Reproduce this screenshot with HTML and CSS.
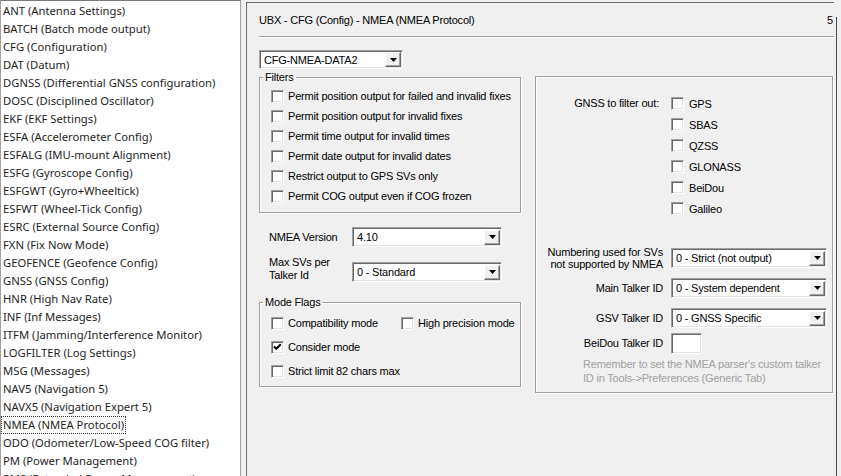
FILE: index.html
```html
<!DOCTYPE html>
<html>
<head>
<meta charset="utf-8">
<link rel="stylesheet" href="styles.css">
</head>
<body>
<div class="list">
  <div class="item">ANT (Antenna Settings)</div>
  <div class="item">BATCH (Batch mode output)</div>
  <div class="item">CFG (Configuration)</div>
  <div class="item">DAT (Datum)</div>
  <div class="item">DGNSS (Differential GNSS configuration)</div>
  <div class="item">DOSC (Disciplined Oscillator)</div>
  <div class="item">EKF (EKF Settings)</div>
  <div class="item">ESFA (Accelerometer Config)</div>
  <div class="item">ESFALG (IMU-mount Alignment)</div>
  <div class="item">ESFG (Gyroscope Config)</div>
  <div class="item">ESFGWT (Gyro+Wheeltick)</div>
  <div class="item">ESFWT (Wheel-Tick Config)</div>
  <div class="item">ESRC (External Source Config)</div>
  <div class="item">FXN (Fix Now Mode)</div>
  <div class="item">GEOFENCE (Geofence Config)</div>
  <div class="item">GNSS (GNSS Config)</div>
  <div class="item">HNR (High Nav Rate)</div>
  <div class="item">INF (Inf Messages)</div>
  <div class="item">ITFM (Jamming/Interference Monitor)</div>
  <div class="item">LOGFILTER (Log Settings)</div>
  <div class="item">MSG (Messages)</div>
  <div class="item">NAV5 (Navigation 5)</div>
  <div class="item">NAVX5 (Navigation Expert 5)</div>
  <div class="item focus">NMEA (NMEA Protocol)</div>
  <div class="item">ODO (Odometer/Low-Speed COG filter)</div>
  <div class="item">PM (Power Management)</div>
  <div class="item">PMS (Extended Power Management)</div>
</div>

<div class="panel">
  <div class="title"><span>UBX - CFG (Config) - NMEA (NMEA Protocol)</span><span class="cut">5</span></div>
  <div class="rule"></div>

  <div class="cols">
    <div class="leftcol">
      <div class="combo w144"><span class="val">CFG-NMEA-DATA2</span><span class="btn"><svg width="7" height="4" viewBox="0 0 7 4"><path d="M0 0H7L3.5 4Z"/></svg></span></div>

      <fieldset class="grp filters">
        <legend>Filters</legend>
        <div class="chk"><span class="cb"></span>Permit position output for failed and invalid fixes</div>
        <div class="chk"><span class="cb"></span>Permit position output for invalid fixes</div>
        <div class="chk"><span class="cb"></span>Permit time output for invalid times</div>
        <div class="chk"><span class="cb"></span>Permit date output for invalid dates</div>
        <div class="chk"><span class="cb"></span>Restrict output to GPS SVs only</div>
        <div class="chk"><span class="cb"></span>Permit COG output even if COG frozen</div>
      </fieldset>

      <div class="ver-row">
        <span class="lbl">NMEA Version</span>
        <div class="combo w150"><span class="val">4.10</span><span class="btn"><svg width="7" height="4" viewBox="0 0 7 4"><path d="M0 0H7L3.5 4Z"/></svg></span></div>
      </div>
      <div class="ver-row two">
        <span class="lbl">Max SVs per<br>Talker Id</span>
        <div class="combo w150"><span class="val">0 - Standard</span><span class="btn"><svg width="7" height="4" viewBox="0 0 7 4"><path d="M0 0H7L3.5 4Z"/></svg></span></div>
      </div>

      <fieldset class="grp modes">
        <legend>Mode Flags</legend>
        <div class="modegrid">
          <div class="chk tall"><span class="cb"></span>Compatibility mode</div>
          <div class="chk tall"><span class="cb"></span>High precision mode</div>
          <div class="chk tall"><span class="cb"><svg width="11" height="11" viewBox="0 0 11 11"><path d="M2 4.5L4.2 6.8L8.8 2.2" fill="none" stroke="#000" stroke-width="2"/></svg></span>Consider mode</div>
          <div></div>
          <div class="chk tall"><span class="cb"></span>Strict limit 82 chars max</div>
        </div>
      </fieldset>
    </div>

    <div class="grp rightgrp">
      <div class="frow gnss">
        <span class="rlbl">GNSS to filter out:</span>
        <div class="gnsslist">
          <div class="chk g"><span class="cb"></span>GPS</div>
          <div class="chk g"><span class="cb"></span>SBAS</div>
          <div class="chk g"><span class="cb"></span>QZSS</div>
          <div class="chk g"><span class="cb"></span>GLONASS</div>
          <div class="chk g"><span class="cb"></span>BeiDou</div>
          <div class="chk g"><span class="cb"></span>Galileo</div>
        </div>
      </div>
      <div class="frow numbering">
        <span class="rlbl small">Numbering used for SVs<br>not supported by NMEA</span>
        <div class="combo w156"><span class="val">0 - Strict (not output)</span><span class="btn"><svg width="7" height="4" viewBox="0 0 7 4"><path d="M0 0H7L3.5 4Z"/></svg></span></div>
      </div>
      <div class="frow main">
        <span class="rlbl">Main Talker ID</span>
        <div class="combo w156"><span class="val">0 - System dependent</span><span class="btn"><svg width="7" height="4" viewBox="0 0 7 4"><path d="M0 0H7L3.5 4Z"/></svg></span></div>
      </div>
      <div class="frow gsv">
        <span class="rlbl">GSV Talker ID</span>
        <div class="combo w156"><span class="val">0 - GNSS Specific</span><span class="btn"><svg width="7" height="4" viewBox="0 0 7 4"><path d="M0 0H7L3.5 4Z"/></svg></span></div>
      </div>
      <div class="frow beidou">
        <span class="rlbl">BeiDou Talker ID</span>
        <div class="edit"></div>
      </div>
      <div class="note">Remember to set the NMEA parser's custom talker<br>ID in Tools-&gt;Preferences (Generic Tab)</div>
    </div>
  </div>
</div>
<div class="vstrip"></div>
</body>
</html>
```

FILE: styles.css
```css
html, body {
  margin: 0;
  padding: 0;
}
body {
  width: 841px;
  height: 476px;
  overflow: hidden;
  display: flex;
  align-items: flex-start;
  background: #f0f0f0;
  font-family: "Liberation Sans", Arial, sans-serif;
  font-size: 11px;
  letter-spacing: -0.2px;
  color: #000;
}

/* ---------- left list ---------- */
.list {
  box-sizing: border-box;
  width: 241px;
  height: 490px;
  flex: none;
  background: #fff;
  border: 1px solid #a0a0a0;
  border-top-color: #7a7a7a;
  padding-top: 1px;
  font-family: "Noto Sans", "Open Sans", sans-serif;
  font-size: 11.25px;
  letter-spacing: 0;
  color: #1e1e1e;
}
.item {
  height: 18px;
  line-height: 18px;
  padding-left: 2px;
  white-space: nowrap;
}
.item.focus {
  width: fit-content;
  padding-right: 2px;
  outline: 1px dotted #333;
  outline-offset: -1px;
}

/* ---------- panel ---------- */
.panel {
  box-sizing: border-box;
  width: 588px;
  height: 480px;
  flex: none;
  margin-left: 5px;
  margin-top: 2px;
  border-left: 1px solid #6d6d6d;
  border-top: 1px solid #6d6d6d;
  overflow: hidden;
  padding-left: 12px;
}
.vstrip {
  flex: 1;
  align-self: stretch;
  margin-left: 2px;
  margin-top: 17px;
  border-left: 1px solid #4a4a4a;
}
.title {
  height: 33px;
  box-sizing: border-box;
  padding-top: 11px;
  line-height: 13px;
  display: flex;
  justify-content: space-between;
  width: 574px;
}
.rule {
  border-top: 1px solid #a0a0a0;
  border-bottom: 1px solid #fff;
}
.cols {
  display: flex;
  align-items: flex-start;
  gap: 14px;
  margin-top: 12px;
}
.leftcol {
  width: 262px;
  flex: none;
}

/* ---------- combo box ---------- */
.combo {
  box-sizing: border-box;
  height: 20px;
  display: flex;
  align-items: center;
  background: #fff;
  border: 1px solid;
  border-color: #a0a0a0 #fff #fff #a0a0a0;
  box-shadow: inset 1px 1px 0 #696969, inset -1px -1px 0 #e3e3e3;
  padding: 0 1px 0 4px;
}
.combo.w144 { width: 144px; height: 19px; }
.combo.w150 { width: 150px; }
.combo.w156 { width: 156px; }
.combo .val {
  flex: 1;
  line-height: 14px;
  white-space: nowrap;
  overflow: hidden;
}
.combo .btn {
  box-sizing: border-box;
  width: 16px;
  height: 15px;
  display: flex;
  align-items: center;
  justify-content: center;
  background: #f0f0f0;
  border: 1px solid;
  border-color: #fff #696969 #696969 #fff;
  box-shadow: inset -1px -1px 0 #a0a0a0;
}
.combo .btn svg { fill: #000; }

/* ---------- group boxes ---------- */
.grp {
  box-sizing: border-box;
  border: 1px solid #a0a0a0;
  box-shadow: 1px 1px 0 #fff, inset 1px 1px 0 #fff;
  margin: 0;
  min-width: 0;
}
fieldset.grp legend {
  line-height: 13px;
  padding: 0 2px;
  margin-left: -8px;
}
.filters {
  width: 262px;
  margin-top: 2px;
  padding: 2px 0 6px 11px;
}
.modes {
  width: 262px;
  margin-top: 14px;
  padding: 2px 0 3px 11px;
}
.modegrid {
  display: grid;
  grid-template-columns: 130px auto;
}

/* ---------- checkboxes ---------- */
.chk {
  height: 20px;
  display: flex;
  align-items: center;
  gap: 4px;
  white-space: nowrap;
}
.chk.tall { height: 24px; }
.chk.g { height: 21px; gap: 5px; }
.cb {
  box-sizing: border-box;
  width: 13px;
  height: 13px;
  flex: none;
  background: #fff;
  border: 1px solid;
  border-color: #a0a0a0 #fff #fff #a0a0a0;
  box-shadow: inset 1px 1px 0 #696969, inset -1px -1px 0 #e3e3e3;
  display: flex;
  align-items: center;
  justify-content: center;
}
.cb svg { display: block; }

/* ---------- NMEA version rows ---------- */
.ver-row {
  display: flex;
  align-items: center;
  padding-left: 10px;
  margin-top: 14px;
}
.ver-row .lbl {
  width: 83px;
  flex: none;
  line-height: 13px;
}
.ver-row.two {
  align-items: flex-start;
  margin-top: 9px;
}
.ver-row.two .combo { margin-top: 6px; }

/* ---------- right group ---------- */
.rightgrp {
  width: 298px;
  height: 317px;
  margin-top: 26px;
  padding-top: 16px;
}
.frow {
  display: flex;
  align-items: center;
  gap: 8px;
}
.rlbl {
  width: 127px;
  flex: none;
  text-align: right;
  line-height: 13px;
  white-space: nowrap;
}
.rlbl.small { line-height: 12px; }
.frow.gnss { align-items: flex-start; }
.frow.gnss .rlbl { line-height: 21px; width: 123px; margin-right: 4px; }
.frow.numbering { margin-top: 27px; }
.frow.main { margin-top: 8px; }
.frow.gsv { margin-top: 10px; }
.frow.beidou { margin-top: 5px; }
.edit {
  box-sizing: border-box;
  width: 31px;
  height: 21px;
  background: #fff;
  border: 1px solid;
  border-color: #a0a0a0 #fff #fff #a0a0a0;
  box-shadow: inset 1px 1px 0 #696969, inset -1px -1px 0 #e3e3e3;
}
.note {
  margin-top: 3px;
  padding-left: 47px;
  line-height: 14px;
  color: #a0a0a0;
  white-space: nowrap;
}
```
